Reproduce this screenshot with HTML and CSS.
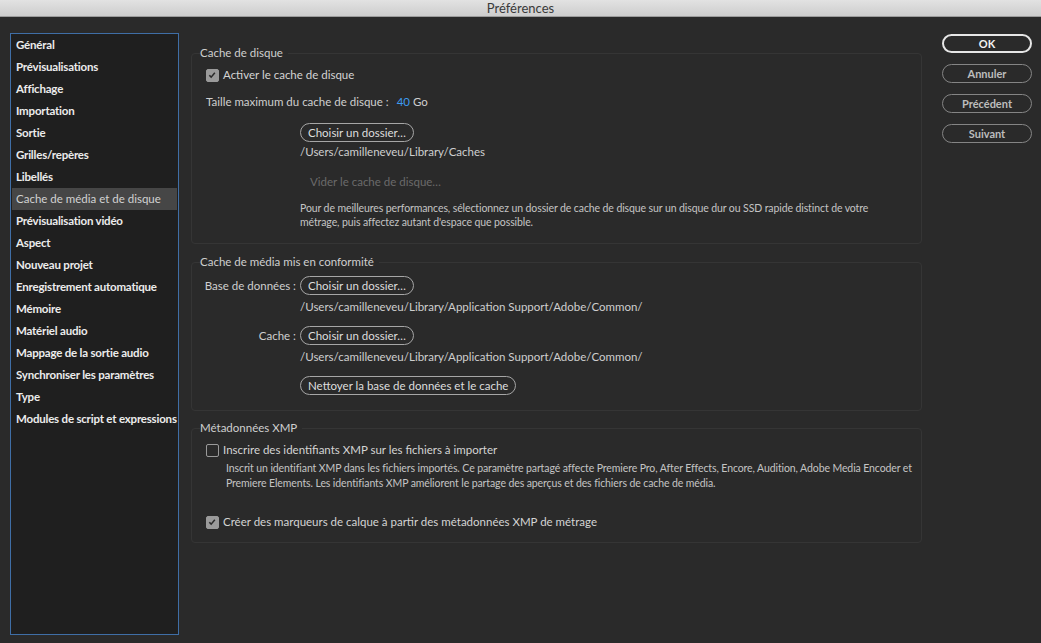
FILE: index.html
```html
<!DOCTYPE html>
<html lang="fr">
<head>
  <meta charset="utf-8">
  <title>Préférences</title>
  <link rel="stylesheet" href="styles.css">
</head>
<body>
  <div class="titlebar">Préférences</div>
  <div class="window">
    <ul class="nav">
      <li>Général</li>
      <li>Prévisualisations</li>
      <li>Affichage</li>
      <li>Importation</li>
      <li>Sortie</li>
      <li>Grilles/repères</li>
      <li>Libellés</li>
      <li class="active">Cache de média et de disque</li>
      <li>Prévisualisation vidéo</li>
      <li>Aspect</li>
      <li>Nouveau projet</li>
      <li>Enregistrement automatique</li>
      <li>Mémoire</li>
      <li>Matériel audio</li>
      <li>Mappage de la sortie audio</li>
      <li>Synchroniser les paramètres</li>
      <li>Type</li>
      <li>Modules de script et expressions</li>
    </ul>

    <div class="panels">
      <fieldset class="group group-disk">
        <legend>Cache de disque</legend>
        <label class="check on"><span class="box"><svg viewBox="0 0 13 13"><path d="M3 6.8l2.4 2.5 4.8-5.6"/></svg></span>Activer le cache de disque</label>
        <div class="size">Taille maximum du cache de disque :<span class="num">40</span>Go</div>
        <div class="indent">
          <button class="pill">Choisir un dossier…</button>
          <div class="path">/Users/camilleneveu/Library/Caches</div>
          <div class="disabled">Vider le cache de disque…</div>
          <p class="note">Pour de meilleures performances, sélectionnez un dossier de cache de disque sur un disque dur ou SSD rapide distinct de votre<br>métrage, puis affectez autant d'espace que possible.</p>
        </div>
      </fieldset>

      <fieldset class="group group-media">
        <legend>Cache de média mis en conformité</legend>
        <div class="field">
          <span class="label">Base de données :</span>
          <button class="pill">Choisir un dossier…</button>
        </div>
        <div class="path indent">/Users/camilleneveu/Library/Application Support/Adobe/Common/</div>
        <div class="field gap">
          <span class="label">Cache :</span>
          <button class="pill">Choisir un dossier…</button>
        </div>
        <div class="path indent">/Users/camilleneveu/Library/Application Support/Adobe/Common/</div>
        <div class="indent gap">
          <button class="pill">Nettoyer la base de données et le cache</button>
        </div>
      </fieldset>

      <fieldset class="group group-xmp">
        <legend>Métadonnées XMP</legend>
        <label class="check"><span class="box"></span>Inscrire des identifiants XMP sur les fichiers à importer</label>
        <p class="note sub">Inscrit un identifiant XMP dans les fichiers importés. Ce paramètre partagé affecte Premiere Pro, After Effects, Encore, Audition, Adobe Media Encoder et<br>Premiere Elements. Les identifiants XMP améliorent le partage des aperçus et des fichiers de cache de média.</p>
        <label class="check on last"><span class="box"><svg viewBox="0 0 13 13"><path d="M3 6.8l2.4 2.5 4.8-5.6"/></svg></span>Créer des marqueurs de calque à partir des métadonnées XMP de métrage</label>
      </fieldset>
    </div>

    <div class="actions">
      <button class="btn primary">OK</button>
      <button class="btn">Annuler</button>
      <button class="btn">Précédent</button>
      <button class="btn">Suivant</button>
    </div>
  </div>
</body>
</html>
```

FILE: styles.css
```css
html, body {
  margin: 0;
  padding: 0;
}
body {
  background: #2a2a2a;
  color: #cfcfcf;
  font: 11.5px/18px Lato, "Noto Sans", sans-serif;
  height: 643px;
  overflow: hidden;
}
.titlebar {
  height: 16px;
  line-height: 16px;
  border-bottom: 1px solid #9c9c9c;
  background: linear-gradient(#e2e2e2, #cdcdcd);
  color: #3a3a3a;
  font-size: 13px;
  text-align: center;
}
.window {
  display: flex;
  align-items: flex-start;
  padding: 16px 9px 9px 10px;
}

/* liste de gauche */
.nav {
  flex-shrink: 0;
  list-style: none;
  margin: 0;
  padding: 0;
  width: 167px;
  height: 600px;
  border: 1px solid #3f6ea6;
  background: #1f1f1f;
}
.nav li {
  height: 22px;
  line-height: 22px;
  margin: 0 1px;
  padding-left: 4px;
  color: #ececec;
  font-weight: bold;
  letter-spacing: -0.2px;
  white-space: nowrap;
}
.nav li.active {
  background: #464646;
  color: #d2d2d2;
  font-weight: normal;
  letter-spacing: 0;
}

/* groupes */
.panels {
  flex-shrink: 0;
  width: 731px;
  margin-left: 12px;
  padding-top: 13px;
}
.group {
  margin: 0;
  padding: 0 0 14px 14px;
  border: 1px solid #353535;
  border-radius: 4px;
  min-width: 0;
}
.group legend {
  margin-left: -6px;
  padding: 0 5px 0 0;
  line-height: 14px;
  color: #cfcfcf;
}
.group-media {
  margin-top: 11px;
  padding-bottom: 15px;
}
.group-xmp {
  margin-top: 10px;
  padding-bottom: 11px;
}
.check {
  display: flex;
  align-items: center;
  height: 18px;
  margin-top: 6px;
  color: #d4d4d4;
}
.box {
  width: 13px;
  height: 13px;
  margin-right: 4px;
  box-sizing: border-box;
  border: 1.5px solid #9a9a9a;
  border-radius: 2px;
}
.check.on .box {
  background: #9a9a9a;
}
.box svg {
  display: block;
  width: 10px;
  height: 10px;
  fill: none;
  stroke: #2a2a2a;
  stroke-width: 2;
}
.size {
  margin-top: 9px;
}
.num {
  color: #3d9bf0;
  margin: 0 3px 0 8px;
}
.indent {
  margin-left: 94px;
}
.pill {
  display: inline-block;
  height: 19px;
  padding: 0 7px;
  border: 1px solid #a6a6a6;
  border-radius: 10px;
  background: #2a2a2a;
  color: #dedede;
  font: 11.5px/17px Lato, "Noto Sans", sans-serif;
}
.group-disk .pill {
  margin-top: 12px;
}
.path {
  margin-top: 2px;
  line-height: 15px;
}
.group-media .path {
  margin-top: 4px;
}
.disabled {
  margin: 14px 0 0 10px;
  color: #6a6a6a;
}
.note {
  margin: 10px 0 0 0;
  font-size: 10.5px;
  line-height: 14px;
  letter-spacing: -0.1px;
  color: #c4c4c4;
  white-space: nowrap;
}
.field {
  display: flex;
  align-items: center;
  margin-top: 7px;
}
.field .label {
  display: flex;
  justify-content: flex-end;
  width: 90px;
  margin-right: 4px;
  white-space: nowrap;
}
.gap {
  margin-top: 12px;
}
.note.sub {
  margin: 2px 0 0 20px;
  line-height: 15px;
}
.check.last {
  margin-top: 22px;
}

/* boutons de droite */
.actions {
  flex-shrink: 0;
  display: flex;
  flex-direction: column;
  gap: 11px;
  width: 90px;
  margin-left: 20px;
  padding-top: 1px;
}
.btn {
  height: 19px;
  padding: 0;
  border: 1px solid #858585;
  border-radius: 10px;
  background: #2a2a2a;
  color: #bdbdbd;
  font: bold 11px/16px Lato, "Noto Sans", sans-serif;
}
.btn.primary {
  border: 2px solid #e6e6e6;
  color: #f2f2f2;
}
```
